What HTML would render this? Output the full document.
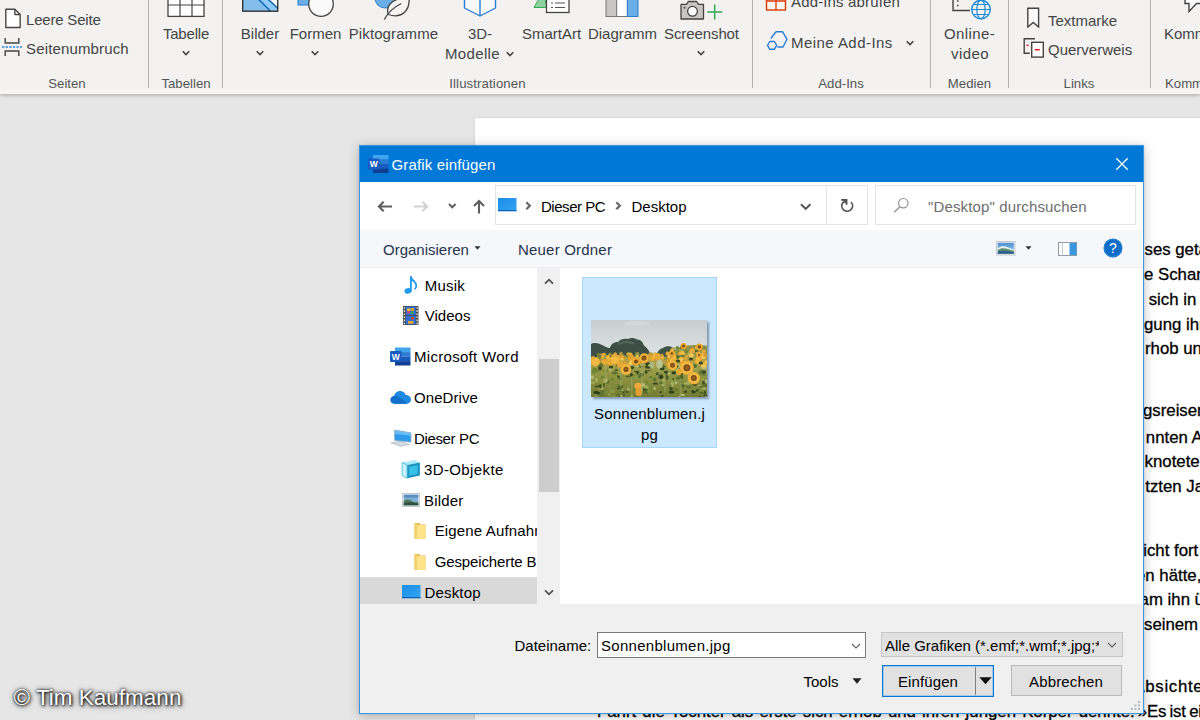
<!DOCTYPE html>
<html lang="de">
<head>
<meta charset="utf-8">
<title>Grafik einfügen</title>
<style>
*{box-sizing:border-box;margin:0;padding:0}
html,body{width:1200px;height:720px;overflow:hidden}
body{position:relative;background:#e6e6e6;font-family:"Liberation Sans",sans-serif;color:#3b3a39}
.abs{position:absolute}
/* ---------- ribbon ---------- */
#ribbon{position:absolute;left:0;top:0;width:1200px;height:94px;overflow:visible;background:linear-gradient(#f3f2f1 0,#f3f2f1 89px,#f7f6f5 90.5px,#f7f6f5 94px);box-shadow:0 1px 4px rgba(0,0,0,.28);z-index:2}
#ribbon .t{position:absolute;font-size:15px;line-height:18px;white-space:nowrap;color:#444}
#ribbon .c{transform:translateX(-50%);text-align:center}
#ribbon .g{position:absolute;font-size:13.2px;line-height:16px;margin-top:.6px;white-space:nowrap;color:#555;transform:translateX(-50%)}
#ribbon .sep{position:absolute;top:0;width:1px;height:88px;background:#b4b2b0;box-shadow:0 0 .6px #b4b2b0}
#ribbon svg{position:absolute;overflow:visible}
/* ---------- document ---------- */
#page{position:absolute;left:475px;top:118px;width:725px;height:602px;background:#fff;box-shadow:0 0 2px rgba(0,0,0,.15);z-index:1}
.doc{position:absolute;font-size:16.8px;line-height:22px;color:#000;-webkit-text-stroke:.3px #000;white-space:nowrap;z-index:1;font-family:"Liberation Sans",sans-serif}
/* ---------- dialog ---------- */
#dlg{position:absolute;left:359px;top:145px;width:785px;height:569px;border:1px solid #3c97e3;background:#f0f0f0;z-index:5;box-shadow:0 2px 11px rgba(0,0,0,.24),0 0 2px rgba(0,0,0,.14);color:#000}
#dlg .t{position:absolute;font-size:15px;line-height:18px;white-space:nowrap}
#dlg svg{position:absolute;overflow:visible}
#title{position:absolute;left:0;top:0;width:783px;height:36px;background:#0078d7}
#addr{position:absolute;left:0;top:36px;width:783px;height:48px;background:#fff}
#tool{position:absolute;left:0;top:84px;width:783px;height:38px;background:#f5f7fa;border-bottom:1px solid #eceef0}
#nav{position:absolute;left:0;top:122px;width:177px;height:336px;background:#fff;overflow:hidden}
#sb{position:absolute;left:178.5px;top:122px;width:20px;height:336px;background:#f0f0f0}
#files{position:absolute;left:200px;top:122px;width:583px;height:336px;background:#fff}
#wm{position:absolute;left:13.5px;top:684px;font-size:22.5px;line-height:28px;color:#fff;z-index:9;white-space:nowrap;text-shadow:0 0 2px rgba(0,0,0,.9),1px 1px 3px rgba(0,0,0,.85),0 0 5px rgba(0,0,0,.6),1px 2px 6px rgba(0,0,0,.4)}
</style>
</head>
<body>

<!-- ================= RIBBON ================= -->
<div id="ribbon">
  <!-- Seiten group -->
  <svg style="left:3.5px;top:8.3px" width="19" height="21.1" viewBox="0 0 18 20"><path d="M1.7 1.2h8.6l5 5v12.3H1.7z" fill="#fff" stroke="#444" stroke-width="1.3" stroke-linejoin="round"/><path d="M10.3 1.2v5h5" fill="none" stroke="#444" stroke-width="1.3" stroke-linejoin="round"/></svg>
  <div class="t" style="left:26px;top:11px;letter-spacing:-.2px">Leere Seite</div>
  <svg style="left:2px;top:37px" width="20" height="20" viewBox="0 0 20 20"><path d="M3.2 1v5h13.6V1M3.2 19v-5h13.6v5" fill="none" stroke="#444" stroke-width="1.4"/><path d="M0 10h20" stroke="#2b88d8" stroke-width="1.4" stroke-dasharray="2.4 1.2"/></svg>
  <div class="t" style="left:26px;top:40px;letter-spacing:.15px">Seitenumbruch</div>
  <div class="g" style="left:67px;top:75px">Seiten</div>
  <div class="sep" style="left:148px"></div>

  <!-- Tabellen group -->
  <svg style="left:167px;top:-8px" width="38" height="26" viewBox="0 0 38 26"><rect x="1" y="1" width="36" height="23.4" fill="#fff" stroke="#444" stroke-width="1.3"/><path d="M13 1v23.4M25 1v23.4M1 13h36" stroke="#444" stroke-width="1.2"/></svg>
  <div class="t c" style="left:186px;top:25px;letter-spacing:-.2px">Tabelle</div>
  <svg style="left:181px;top:50px" width="10" height="6" viewBox="0 0 10 6"><path d="M1.7 1.2l3.3 3.3 3.3-3.3" fill="none" stroke="#444" stroke-width="1.6"/></svg>
  <div class="g" style="left:186px;top:75px">Tabellen</div>
  <div class="sep" style="left:222px"></div>

  <!-- Illustrationen group -->
  <svg style="left:242px;top:-10px" width="37" height="22" viewBox="0 0 37 22"><rect x=".7" y="-6" width="35" height="27.2" fill="#83bdea"/><path d="M16.3 0l19.4 18.2V0z" fill="#fff"/><path d="M7.3 0l21.3 21.3h7.1v-3.5L16.3 0z" fill="#8ecbf8"/><path d="M6.3 -1l22.3 22.3M15.3 -1l20.4 19.2" stroke="#1565b0" stroke-width="1.5" fill="none"/><rect x=".7" y="-6" width="35" height="27.2" fill="none" stroke="#333" stroke-width="1.4"/></svg>
  <div class="t c" style="left:260px;top:25px">Bilder</div>
  <svg style="left:255px;top:50px" width="10" height="6" viewBox="0 0 10 6"><path d="M1.7 1.2l3.3 3.3 3.3-3.3" fill="none" stroke="#444" stroke-width="1.6"/></svg>

  <svg style="left:296px;top:-10px" width="40" height="28" viewBox="0 0 40 28"><rect x="2" y="-4" width="12" height="19" fill="#69afe5" stroke="#2b7cd3" stroke-width="1"/><circle cx="25" cy="14" r="12.3" fill="#fafafa" stroke="#444" stroke-width="1.3"/></svg>
  <div class="t c" style="left:315.5px;top:25px">Formen</div>
  <svg style="left:310px;top:50px" width="10" height="6" viewBox="0 0 10 6"><path d="M1.7 1.2l3.3 3.3 3.3-3.3" fill="none" stroke="#444" stroke-width="1.6"/></svg>

  <svg style="left:372px;top:-10px" width="40" height="31" viewBox="0 0 40 31"><circle cx="13" cy="8" r="10" fill="#69afe5" stroke="#2b7cd3" stroke-width="1"/><path d="M16.5 24.5c-3-7 1-16 20.5-17.5 1.5 14-8 22-20.5 17.5z" fill="#f6f5f4" stroke="#444" stroke-width="1.3"/><path d="M12.3 29.5c3-6 9-12 17-16" fill="none" stroke="#444" stroke-width="1.3"/></svg>
  <div class="t c" style="left:393.5px;top:25px;letter-spacing:.1px">Piktogramme</div>

  <svg style="left:463px;top:-12px" width="34" height="30" viewBox="0 0 34 30"><path d="M1.5 4l15.5-7 15.5 7v16l-15.5 8-15.5-8z" fill="#f8f8f8" stroke="#2b7cd3" stroke-width="1.4" stroke-linejoin="round"/><path d="M1.5 4l15.5 7 15.5-7M17 11v17" fill="none" stroke="#2b7cd3" stroke-width="1.4" stroke-linejoin="round"/></svg>
  <div class="t c" style="left:480px;top:25px">3D-</div>
  <div class="t c" style="left:472.5px;top:45px;letter-spacing:.35px">Modelle</div>
  <svg style="left:505px;top:51px" width="10" height="6" viewBox="0 0 10 6"><path d="M1.7 1.2l3.3 3.3 3.3-3.3" fill="none" stroke="#444" stroke-width="1.6"/></svg>

  <svg style="left:532px;top:-10px" width="40" height="24" viewBox="0 0 40 24"><path d="M2 17.5l9-16 4 16z" fill="#8fd19e" stroke="#33a852" stroke-width="1"/><rect x="14.5" y="-4" width="22.5" height="26.5" fill="#fff" stroke="#444" stroke-width="1.3"/><path d="M19 13h2M23 13h10M19 17.5h2M23 17.5h10" stroke="#555" stroke-width="1.2"/></svg>
  <div class="t c" style="left:551.5px;top:25px">SmartArt</div>

  <svg style="left:605px;top:-10px" width="34" height="28" viewBox="0 0 34 28"><rect x="1" y="-4" width="10.7" height="30.5" fill="#c8c6c4" stroke="#7a7877" stroke-width="1"/><rect x="11.7" y="-4" width="10.7" height="30.5" fill="#fff" stroke="#7a7877" stroke-width="1"/><rect x="22.4" y="-4" width="10.6" height="30.5" fill="#69afe5" stroke="#2b7cd3" stroke-width="1"/></svg>
  <div class="t c" style="left:622.5px;top:25px">Diagramm</div>

  <svg style="left:679px;top:0" width="46" height="22" viewBox="0 0 46 22"><path d="M2 4.3h5.5l1.8-2.8h8.4l1.8 2.8h5v14.7H2z" fill="#c8c6c4" stroke="#444" stroke-width="1.3" stroke-linejoin="round"/><circle cx="13.5" cy="11.3" r="4.9" fill="#fff" stroke="#444" stroke-width="1.3"/><circle cx="5.5" cy="7.7" r="1" fill="#444"/><path d="M35.7 4.5v15M28.3 12h15" stroke="#33a852" stroke-width="1.5"/></svg>
  <div class="t c" style="left:701.5px;top:25px;letter-spacing:-.1px">Screenshot</div>
  <svg style="left:695.5px;top:50px" width="10" height="6" viewBox="0 0 10 6"><path d="M1.7 1.2l3.3 3.3 3.3-3.3" fill="none" stroke="#444" stroke-width="1.6"/></svg>
  <div class="g" style="left:487.5px;top:75px;letter-spacing:.12px">Illustrationen</div>
  <div class="sep" style="left:752px"></div>

  <!-- Add-Ins group -->
  <svg style="left:765px;top:-10px" width="22" height="22" viewBox="0 0 22 22"><rect x="1.5" y="2" width="19" height="18" fill="#fff5f0" stroke="#d83b01" stroke-width="1.4"/><path d="M11 2v18M1.5 11h19" stroke="#d83b01" stroke-width="1.3"/></svg>
  <div class="t" style="left:791px;top:-7px;letter-spacing:.15px">Add-Ins abrufen</div>
  <svg style="left:765px;top:30px" width="24" height="22" viewBox="0 0 24 22"><path d="M5.8 8.5l5.2-6.8h6.5l4.5 7.6-4 7.7h-5.6" fill="none" stroke="#2b7cd3" stroke-width="1.4" stroke-linejoin="round"/><path d="M4.8 11.5h4.6l2.3 3.9-2.3 3.9H4.8l-2.3-3.9z" fill="#f3f2f1" stroke="#2b7cd3" stroke-width="1.4" stroke-linejoin="round"/></svg>
  <div class="t" style="left:791px;top:34px;letter-spacing:.45px">Meine Add-Ins</div>
  <svg style="left:904.5px;top:40px" width="10" height="6" viewBox="0 0 10 6"><path d="M1.7 1.2l3.3 3.3 3.3-3.3" fill="none" stroke="#444" stroke-width="1.6"/></svg>
  <div class="g" style="left:841px;top:75px">Add-Ins</div>
  <div class="sep" style="left:930px"></div>

  <!-- Medien -->
  <svg style="left:951px;top:-10px" width="42" height="32" viewBox="0 0 42 32"><path d="M2 -2v22.5h17" fill="none" stroke="#444" stroke-width="1.4"/><path d="M6 11h1.5M6 15.5h1.5" stroke="#444" stroke-width="1.4"/><circle cx="30" cy="19.5" r="9.3" fill="#f3f2f1" stroke="#1e8ad6" stroke-width="1.4"/><ellipse cx="30" cy="19.5" rx="4.2" ry="9.3" fill="none" stroke="#1e8ad6" stroke-width="1.2"/><path d="M20.7 19.5h18.6M22 14.5h16M22 24.5h16" stroke="#1e8ad6" stroke-width="1.2"/></svg>
  <div class="t c" style="left:969.5px;top:25px;letter-spacing:.4px">Online-</div>
  <div class="t c" style="left:970px;top:45px;letter-spacing:.4px">video</div>
  <div class="g" style="left:969.5px;top:75px">Medien</div>
  <div class="sep" style="left:1008px"></div>

  <!-- Links -->
  <svg style="left:1026px;top:7px" width="15" height="22" viewBox="0 0 15 22"><path d="M1.8 1.3h10.8v18.7l-5.4-4.6-5.4 4.6z" fill="#fbfbfb" stroke="#444" stroke-width="1.4" stroke-linejoin="miter"/></svg>
  <div class="t" style="left:1048px;top:11.5px">Textmarke</div>
  <svg style="left:1022px;top:37px" width="24" height="22" viewBox="0 0 24 22"><path d="M13 1.7H2.2v14.6h5.5" fill="none" stroke="#444" stroke-width="1.4"/><path d="M4.5 8.3h2" stroke="#e81123" stroke-width="1.4"/><rect x="9.7" y="5.3" width="11.6" height="14.8" fill="#fff" stroke="#444" stroke-width="1.4"/><path d="M12.8 12.7h5" stroke="#e81123" stroke-width="1.5"/></svg>
  <div class="t" style="left:1048px;top:40.5px">Querverweis</div>
  <div class="g" style="left:1079px;top:75px">Links</div>
  <div class="sep" style="left:1150px"></div>

  <!-- Kommentare (cut off) -->
  <svg style="left:1183px;top:-8px" width="24" height="24" viewBox="0 0 24 24"><path d="M2 -2v13.5h4v8l7.5-8H24" fill="#fff" stroke="#444" stroke-width="1.4" stroke-linejoin="miter"/></svg>
  <div class="t" style="left:1164px;top:24.5px">Kommentar</div>
  <div class="g" style="left:1165px;top:75px;transform:none">Kommentare</div>
</div>

<!-- ================= DOCUMENT ================= -->
<div id="page"></div>
<div class="doc" style="left:1144.5px;top:238.5px">ses getan</div>
<div class="doc" style="left:1144px;top:264.4px">e Scham</div>
<div class="doc" style="left:1148.7px;top:288.6px">sich in</div>
<div class="doc" style="left:1144px;top:313.8px">gung ihr</div>
<div class="doc" style="left:1145px;top:338.1px">rhob und</div>
<div class="doc" style="left:1143px;top:400px">gsreisen</div>
<div class="doc" style="left:1145.8px;top:426.7px">nnten A</div>
<div class="doc" style="left:1144.6px;top:451px">knotete</div>
<div class="doc" style="left:1145.3px;top:476px">tzten Ja</div>
<div class="doc" style="left:1143.2px;top:539.8px">icht fort</div>
<div class="doc" style="left:1136px;top:564.5px">en hätte,</div>
<div class="doc" style="left:1139.6px;top:589.3px">am ihn ü</div>
<div class="doc" style="left:1144px;top:613.6px">seinem</div>
<div class="doc" style="left:1133.4px;top:675.8px;letter-spacing:.7px">Absichten</div>
<div class="doc" style="left:597px;top:700.5px;word-spacing:1.5px">Fahrt die Tochter als erste sich erhob und ihren jungen Körper dehnte.</div>
<div class="doc" style="left:1137.8px;top:700.5px;letter-spacing:-.2px;word-spacing:-1px">»Es ist ein</div>

<!-- ================= DIALOG ================= -->
<div id="dlg">
  <div id="title">
    <!-- Word icon -->
    <svg style="left:8px;top:8px" width="21" height="20" viewBox="0 0 21 20"><rect x="5" y="1" width="15.5" height="4.6" fill="#41a5ee"/><rect x="5" y="5.6" width="15.5" height="4.5" fill="#2b7cd3"/><rect x="5" y="10.1" width="15.5" height="4.5" fill="#185abd"/><rect x="5" y="14.6" width="15.5" height="4.4" fill="#103f91"/><rect x="0" y="4.5" width="11.5" height="11" rx="1" fill="#185abd"/><text x="5.75" y="13.3" font-family="Liberation Sans, sans-serif" font-size="8.5" font-weight="bold" fill="#fff" text-anchor="middle">W</text></svg>
    <div class="t" style="left:31.5px;top:9.5px;color:#fff;letter-spacing:.16px">Grafik einfügen</div>
    <svg style="left:755px;top:10.5px" width="14" height="14" viewBox="0 0 14 14"><path d="M1.3 1.3l11.4 11.4M12.7 1.3L1.3 12.7" stroke="#fff" stroke-width="1.3"/></svg>
  </div>
  <div id="addr">
    <!-- back / forward / recent / up -->
    <svg style="left:17px;top:17.5px" width="16" height="13" viewBox="0 0 16 13"><path d="M15 6.5H2M6.7 1.7L1.9 6.5l4.8 4.8" fill="none" stroke="#5f5f5f" stroke-width="2.1"/></svg>
    <svg style="left:53px;top:17.5px" width="16" height="13" viewBox="0 0 16 13"><path d="M1 6.5h13M9.3 1.7l4.8 4.8-4.8 4.8" fill="none" stroke="#d2d2d2" stroke-width="2.1"/></svg>
    <svg style="left:87.6px;top:20.5px" width="9" height="6" viewBox="0 0 9 6"><path d="M1 1l3.3 3.3L7.6 1" fill="none" stroke="#5f5f5f" stroke-width="2"/></svg>
    <svg style="left:111.5px;top:17px" width="14" height="15" viewBox="0 0 14 15"><path d="M7 14.5V2M2 7L7 2l5 5" fill="none" stroke="#5f5f5f" stroke-width="2.1"/></svg>
    <!-- address box -->
    <div class="abs" style="left:135px;top:3px;width:373px;height:40px;border:1px solid #e4e4e4;background:#fff"></div>
    <div class="abs" style="left:465.5px;top:3px;width:1px;height:40px;background:#e6e6e6"></div>
    <svg style="left:138px;top:16px" width="19" height="14" viewBox="0 0 19 14"><defs><linearGradient id="mon" x1="0" y1="0" x2="1" y2="1"><stop offset="0" stop-color="#1b8ee8"/><stop offset="1" stop-color="#35a4f3"/></linearGradient></defs><rect x="0" y="0" width="18.5" height="13" fill="url(#mon)"/><rect x="0" y="12" width="18.5" height="1.3" fill="#0d63b8"/></svg>
    <svg style="left:164.5px;top:19.4px" width="7" height="10" viewBox="0 0 7 10"><path d="M1.3 1.2l3.5 3.5-3.5 3.5" fill="none" stroke="#6a6a6a" stroke-width="2.3"/></svg>
    <div class="t" style="left:181px;top:15.5px;letter-spacing:-.47px">Dieser PC</div>
    <svg style="left:254.8px;top:19.4px" width="7" height="10" viewBox="0 0 7 10"><path d="M1.3 1.2l3.5 3.5-3.5 3.5" fill="none" stroke="#6a6a6a" stroke-width="2.3"/></svg>
    <div class="t" style="left:271.5px;top:15.5px">Desktop</div>
    <svg style="left:440px;top:20.5px" width="12" height="8" viewBox="0 0 12 8"><path d="M1 1.3l4.7 4.6 4.7-4.6" fill="none" stroke="#555" stroke-width="2.1"/></svg>
    <svg style="left:480px;top:16px" width="15" height="15" viewBox="0 0 15 15"><path d="M11 4A5.4 5.4 0 1 1 2.5 5.1L6 2.3" fill="none" stroke="#555" stroke-width="1.7"/><path d="M1.2 1.9H6.6V6.8" fill="none" stroke="#555" stroke-width="1.7"/><path d="M2.4 2.2h4v4z" fill="#555"/></svg>
    <!-- search box -->
    <div class="abs" style="left:515px;top:3px;width:260.5px;height:40px;border:1px solid #e4e4e4;background:#fff"></div>
    <svg style="left:533px;top:15px" width="17" height="17" viewBox="0 0 17 17"><circle cx="10.3" cy="6.2" r="4.7" fill="none" stroke="#929292" stroke-width="1.2"/><path d="M6.9 9.7L1.3 15.3" stroke="#929292" stroke-width="1.4"/></svg>
    <div class="t" style="left:568px;top:15.5px;color:#6d6d6d;letter-spacing:.14px">"Desktop" durchsuchen</div>
  </div>
  <div id="tool">
    <div class="t" style="left:23px;top:11px;color:#25344f">Organisieren</div>
    <svg style="left:114px;top:16px" width="7" height="4" viewBox="0 0 7 4"><path d="M.5 .3h6L3.5 3.7z" fill="#333"/></svg>
    <div class="t" style="left:158px;top:11px;color:#25344f;letter-spacing:.2px">Neuer Ordner</div>
    <!-- view icon -->
    <svg style="left:636px;top:10.5px" width="20" height="15" viewBox="0 0 20 15"><defs><linearGradient id="sky" x1="0" y1="0" x2="0" y2="1"><stop offset="0" stop-color="#4f8fd0"/><stop offset="1" stop-color="#a9d0ee"/></linearGradient></defs><rect x=".5" y=".5" width="18.5" height="13.5" fill="#e9edf1" stroke="#c3c8ce" stroke-width="1"/><rect x="1.8" y="1.8" width="16" height="11" fill="url(#sky)"/><path d="M1.8 7.5c5-4.5 9-1 16 1v4.3h-16z" fill="#e8f3ea"/><path d="M1.8 9c5-3.5 9-1 16 .8v3h-16z" fill="#5d8f6b"/><path d="M1.8 10.5c6-2 10 0 16 .5v1.8h-16z" fill="#2e5f95"/></svg>
    <svg style="left:664.5px;top:16.2px" width="7" height="4" viewBox="0 0 7 4"><path d="M.5 .3h6L3.5 3.7z" fill="#333"/></svg>
    <!-- preview pane icon -->
    <svg style="left:697.5px;top:12px" width="19" height="14" viewBox="0 0 19 14"><rect x=".5" y=".5" width="18" height="13" fill="#fff" stroke="#8f9aa6" stroke-width="1"/><path d="M4.5 .5v13" stroke="#c5ccd3" stroke-width="1"/><rect x="11.5" y="1" width="7" height="12" fill="#3a96dd"/></svg>
    <!-- help -->
    <svg style="left:743px;top:8.3px" width="20" height="20" viewBox="0 0 20 20"><circle cx="10" cy="10" r="9.5" fill="#0f6cc7"/><circle cx="10" cy="10" r="8.7" fill="none" stroke="#3f94e0" stroke-width=".6"/><text x="10" y="15" font-family="Liberation Sans, sans-serif" font-size="14" fill="#fff" text-anchor="middle">?</text></svg>
  </div>
  <div id="nav">
    <!-- Musik -->
    <svg style="left:43px;top:8px" width="15" height="19" viewBox="0 0 15 19"><path d="M7.9 15V.2" fill="none" stroke="#1e9bf0" stroke-width="1.8"/><path d="M7.9 1c.7 3.6 5.6 4.3 5.4 8.7-.1 1.3-.6 2.3-1.3 3.1" fill="none" stroke="#1e9bf0" stroke-width="1.7" stroke-linecap="round"/><path d="M7.9 .2c.5 2.3 2.5 3.4 3.8 4.8l-1.2 1.3c-.8-.9-1.7-1.3-2.6-1.6z" fill="#1e9bf0"/><ellipse cx="5" cy="14.9" rx="3.6" ry="2.8" fill="#1e9bf0" transform="rotate(-15 5 14.9)"/></svg>
    <div class="t" style="left:64.8px;top:8.6px;letter-spacing:.2px">Musik</div>
    <!-- Videos -->
    <svg style="left:43px;top:37.5px" width="16" height="19" viewBox="0 0 16 19"><rect x="0" y="0" width="15.5" height="19" fill="#4a4a4a"/><rect x="2.8" y=".6" width="10" height="8.5" fill="#2f6fd6"/><rect x="2.8" y="9.9" width="10" height="8.5" fill="#2f6fd6"/><rect x="4" y="2.5" width="3" height="2.5" fill="#e8c23a"/><rect x="7.5" y="2" width="3.5" height="3" fill="#d9a22c"/><rect x="4" y="5" width="3" height="2.5" fill="#c0448f"/><rect x="7.5" y="5.5" width="3" height="2.5" fill="#3aa655"/><rect x="5" y="15" width="5.5" height="2.8" fill="#e8a32c"/><rect x="8" y="11" width="3" height="2.5" fill="#c5492e"/><path d="M1.4 1.2v17M14.1 1.2v17" stroke="#e8e8e8" stroke-width="1.3" stroke-dasharray="1.6 1.5"/></svg>
    <div class="t" style="left:64.8px;top:39px">Videos</div>
    <!-- Microsoft Word -->
    <svg style="left:30px;top:79px" width="21" height="19" viewBox="0 0 21 19"><rect x="5" y=".5" width="15.5" height="4.6" fill="#41a5ee"/><rect x="5" y="5.1" width="15.5" height="4.5" fill="#2b7cd3"/><rect x="5" y="9.6" width="15.5" height="4.5" fill="#185abd"/><rect x="5" y="14.1" width="15.5" height="4.4" fill="#103f91"/><rect x="0" y="4" width="11.5" height="11" rx="1" fill="#185abd"/><text x="5.75" y="12.8" font-family="Liberation Sans, sans-serif" font-size="8.5" font-weight="bold" fill="#fff" text-anchor="middle">W</text></svg>
    <div class="t" style="left:54px;top:79.5px;letter-spacing:.3px">Microsoft Word</div>
    <!-- OneDrive -->
    <svg style="left:30px;top:122px" width="22" height="15" viewBox="0 0 22 15"><path d="M5 13.8c-2.6 0-4.5-1.7-4.5-3.9 0-2 1.5-3.6 3.5-3.8C4.6 3.2 7 1 10 1c2.6 0 4.8 1.5 5.7 3.8 3 .1 5.3 2.2 5.3 4.8 0 2.4-2 4.2-4.6 4.2z" fill="#1b8ae0"/><path d="M4 6.1c2-.4 4 .3 6 1.6l6.5 4.2c1 .6 0 1.9-1 1.9H5c-2.6 0-4.5-1.7-4.5-3.9 0-2 1.5-3.6 3.5-3.8z" fill="#1170c9"/></svg>
    <div class="t" style="left:54px;top:120.5px;letter-spacing:.07px">OneDrive</div>
    <!-- Dieser PC -->
    <svg style="left:30px;top:161px" width="22" height="18" viewBox="0 0 22 18"><path d="M4.5 1l16.5 2.8v9.4L4.5 11.5z" fill="#2d9bea"/><path d="M4.5 1l16.5 2.8v3L4.5 5z" fill="#66bdf5"/><path d="M4.5 1l16.5 2.8v9.4L4.5 11.5z" fill="none" stroke="#9fb4c6" stroke-width=".8"/><path d="M1 13.8l9-1.3 9.5 3-9 1.7z" fill="#d5dde4" stroke="#a9b6c2" stroke-width=".7"/></svg>
    <div class="t" style="left:54px;top:161.5px;letter-spacing:-.35px">Dieser PC</div>
    <!-- 3D-Objekte -->
    <svg style="left:41px;top:191px" width="20" height="20" viewBox="0 0 18 18"><path d="M1 3.2l11.5-2.2 4.5 2.2-11.5 2.2z" fill="#a8ecfa"/><path d="M1 3.2l4.5 2.2v12L1 15z" fill="#c9f1fb"/><path d="M5.5 5.4l11.5-2.2v11.6l-11.5 2.6z" fill="#1d93c2"/><path d="M7.3 7.2l7.7-1.5v7.7l-7.7 1.7z" fill="#37bfe4"/><path d="M1 3.2l4.5 2.2v12L1 15z" fill="none" stroke="#35b6dc" stroke-width=".7"/></svg>
    <div class="t" style="left:64px;top:192.5px;letter-spacing:.38px">3D-Objekte</div>
    <!-- Bilder -->
    <svg style="left:42px;top:225px" width="18" height="14" viewBox="0 0 18 14"><rect x=".4" y=".4" width="17.2" height="13.2" fill="#fff" stroke="#b8bcc2" stroke-width=".8"/><rect x="1.7" y="1.7" width="14.6" height="10.6" fill="#7fb0d8"/><path d="M1.7 8c4-3 7-1 9 .5s3.5 1 5.6 0v3.8H1.7z" fill="#4d7a57"/><path d="M1.7 10.5c5-2 9-1 14.6 0v1.8H1.7z" fill="#2e4f3c"/><rect x="1.7" y="1.7" width="14.6" height="3" fill="#5a90c0"/></svg>
    <div class="t" style="left:64px;top:223.5px;letter-spacing:.2px">Bilder</div>
    <!-- Eigene Aufnahmen -->
    <svg style="left:54px;top:254.5px" width="12" height="16" viewBox="0 0 12 16"><path d="M.5 0h5l1 1.5h5V16H.5z" fill="#e3bd58"/><path d="M3 2h8.5v14H3z" fill="#ffe289"/><path d="M.5 0h2.5v16H.5z" fill="#f3d06c"/></svg>
    <div class="t" style="left:74.7px;top:254px;letter-spacing:.15px">Eigene Aufnahmen</div>
    <!-- Gespeicherte Bilder -->
    <svg style="left:54px;top:285.5px" width="12" height="16" viewBox="0 0 12 16"><path d="M.5 0h5l1 1.5h5V16H.5z" fill="#e3bd58"/><path d="M3 2h8.5v14H3z" fill="#ffe289"/><path d="M.5 0h2.5v16H.5z" fill="#f3d06c"/></svg>
    <div class="t" style="left:74.7px;top:285px;letter-spacing:-.12px">Gespeicherte Bilder</div>
    <!-- Desktop (selected) -->
    <div class="abs" style="left:0;top:309px;width:179px;height:27px;background:#d9d9d9"></div>
    <svg style="left:42px;top:317px" width="19" height="14" viewBox="0 0 19 14"><rect x="0" y="0" width="18.5" height="13" fill="url(#mon)"/><rect x="0" y="12" width="18.5" height="1.3" fill="#0d63b8"/></svg>
    <div class="t" style="left:64.6px;top:316px;letter-spacing:.15px">Desktop</div>
  </div>
  <div id="sb">
    <svg style="left:5px;top:10px" width="10" height="7" viewBox="0 0 10 7"><path d="M1 5.7l4-4 4 4" fill="none" stroke="#505050" stroke-width="1.7"/></svg>
    <div class="abs" style="left:0;top:91px;width:20px;height:133px;background:#cdcdcd"></div>
    <svg style="left:5px;top:321px" width="10" height="7" viewBox="0 0 10 7"><path d="M1 1.3l4 4 4-4" fill="none" stroke="#505050" stroke-width="1.7"/></svg>
  </div>
  <div id="files">
    <div class="abs" style="left:22px;top:9px;width:135px;height:171px;background:#cce8ff;border:1px solid #a6d5fd"></div>
    <svg id="thumb" class="abs" style="left:30.5px;top:52px;box-shadow:2px 2px 2px rgba(70,85,110,.55);overflow:hidden" width="116" height="77" viewBox="0 0 116 77"><defs><linearGradient id="tsky" x1="0" y1="0" x2="0" y2="1"><stop offset="0" stop-color="#c6cfd0"/><stop offset=".45" stop-color="#dde2e0"/></linearGradient><linearGradient id="tfld" x1="0" y1="0" x2="0" y2="1"><stop offset="0" stop-color="#c29f40"/><stop offset=".3" stop-color="#9a9c48"/><stop offset="1" stop-color="#6f7a30"/></linearGradient><filter id="tb" x="-5%" y="-5%" width="110%" height="110%"><feGaussianBlur stdDeviation=".75"/></filter><filter id="tb2" x="-5%" y="-5%" width="110%" height="110%"><feGaussianBlur stdDeviation=".45"/></filter></defs><rect width="116" height="77" fill="url(#tsky)"/><ellipse cx="46" cy="3.5" rx="13" ry="2.6" fill="#d2d9d8" filter="url(#tb)"/><g filter="url(#tb)"><path d="M-2 38V25c4-3 9-2.5 13 0 3 1 5 3 8 3 1-4 4-6 8-6 2-3 7-4 10-3 3-1.5 7-1 9 .5 4 0 6 3 7 6 3 2 5 5 6 8l2 4.5H-2z" fill="#3d5044"/><path d="M65 38c0-5 3-9 7-10 3-2.5 8-2 10 0 3 1 4 4 4 10z" fill="#3f5246"/><path d="M27 24c4-2 10-3 16-.5" stroke="#53685a" stroke-width="2" fill="none"/><rect x="-2" y="37" width="120" height="42" fill="url(#tfld)"/><circle cx="37.2" cy="34.3" r="2.0" fill="#d9a236"/><circle cx="95.9" cy="34.0" r="1.9" fill="#cfa13a"/><circle cx="24.3" cy="33.9" r="1.7" fill="#e2ad3c"/><circle cx="9.7" cy="35.6" r="2.2" fill="#d9a236"/><circle cx="110.8" cy="36.7" r="1.9" fill="#d9a236"/><circle cx="67.1" cy="35.5" r="2.4" fill="#d9a236"/><circle cx="64.7" cy="34.2" r="1.7" fill="#cfa13a"/><circle cx="12.9" cy="35.0" r="2.2" fill="#e2ad3c"/><circle cx="11.2" cy="36.4" r="1.4" fill="#d9a236"/><circle cx="63.6" cy="33.8" r="1.3" fill="#e2ad3c"/><circle cx="57.6" cy="36.2" r="2.1" fill="#8f9445"/><circle cx="68.1" cy="35.8" r="1.6" fill="#e2ad3c"/><circle cx="81.5" cy="34.7" r="1.9" fill="#cfa13a"/><circle cx="57.4" cy="35.2" r="1.7" fill="#cfa13a"/><circle cx="114.7" cy="34.1" r="1.7" fill="#b59a3f"/><circle cx="16.9" cy="35.9" r="1.2" fill="#6f7f38"/><circle cx="8.2" cy="36.3" r="2.1" fill="#b59a3f"/><circle cx="39.1" cy="35.3" r="1.8" fill="#8f9445"/><circle cx="7.1" cy="34.0" r="1.5" fill="#6f7f38"/><circle cx="77.4" cy="33.8" r="2.0" fill="#6f7f38"/><circle cx="67.2" cy="36.9" r="1.7" fill="#6f7f38"/><circle cx="44.5" cy="36.8" r="1.2" fill="#8f9445"/><circle cx="40.9" cy="36.6" r="1.8" fill="#e2ad3c"/><circle cx="89.7" cy="34.1" r="1.5" fill="#8f9445"/><circle cx="107.2" cy="36.0" r="1.4" fill="#8f9445"/><circle cx="63.8" cy="37.9" r="2.2" fill="#cfa13a"/><circle cx="31.9" cy="35.6" r="1.6" fill="#8f9445"/><circle cx="112.0" cy="34.3" r="1.4" fill="#e2ad3c"/><circle cx="76.7" cy="33.6" r="2.2" fill="#e2ad3c"/><circle cx="30.0" cy="33.5" r="1.7" fill="#b59a3f"/><circle cx="71.0" cy="35.1" r="1.4" fill="#cfa13a"/><circle cx="111.1" cy="36.8" r="2.1" fill="#8f9445"/><circle cx="105.1" cy="37.4" r="2.2" fill="#cfa13a"/><circle cx="45.3" cy="35.5" r="1.3" fill="#6f7f38"/><circle cx="46.3" cy="34.5" r="2.4" fill="#8f9445"/><circle cx="18.2" cy="35.2" r="1.3" fill="#d9a236"/><circle cx="65.9" cy="36.2" r="2.3" fill="#cfa13a"/><circle cx="2.0" cy="37.9" r="1.9" fill="#e2ad3c"/><circle cx="73.9" cy="38.3" r="1.9" fill="#8f9445"/><circle cx="13.5" cy="37.7" r="2.4" fill="#8f9445"/><circle cx="55.7" cy="35.1" r="1.4" fill="#6f7f38"/><circle cx="39.4" cy="34.8" r="2.2" fill="#e2ad3c"/><circle cx="59.9" cy="34.5" r="2.3" fill="#b59a3f"/><circle cx="16.3" cy="36.2" r="1.2" fill="#cfa13a"/><circle cx="34.2" cy="36.7" r="1.3" fill="#b59a3f"/><circle cx="60.2" cy="38.0" r="1.6" fill="#e2ad3c"/><circle cx="61.8" cy="37.4" r="1.6" fill="#e2ad3c"/><circle cx="71.4" cy="37.4" r="2.1" fill="#e2ad3c"/><circle cx="94.1" cy="37.6" r="2.1" fill="#e2ad3c"/><circle cx="22.6" cy="36.0" r="2.1" fill="#d9a236"/><circle cx="92.2" cy="35.9" r="1.4" fill="#cfa13a"/><circle cx="111.9" cy="35.7" r="2.3" fill="#b59a3f"/><circle cx="111.7" cy="35.3" r="1.5" fill="#e2ad3c"/><circle cx="54.5" cy="35.2" r="1.8" fill="#cfa13a"/><circle cx="98.2" cy="35.9" r="2.0" fill="#6f7f38"/><circle cx="9.0" cy="36.8" r="2.3" fill="#6f7f38"/><circle cx="87.5" cy="35.9" r="1.4" fill="#6f7f38"/><circle cx="38.2" cy="37.5" r="2.4" fill="#8f9445"/><circle cx="53.7" cy="37.2" r="1.3" fill="#e2ad3c"/><circle cx="19.1" cy="34.1" r="1.4" fill="#8f9445"/><path d="M78 37c2-5 7-8 12-10 6-2 14-3 28-1v13z" fill="#8f9448"/><ellipse cx="109.4" cy="27.8" rx="2.2" ry="1.8" fill="#a3ad5e"/><ellipse cx="87.3" cy="32.6" rx="1.0" ry="1.6" fill="#4f6428"/><ellipse cx="99.9" cy="37.2" rx="1.6" ry="1.7" fill="#6f8236"/><ellipse cx="83.0" cy="28.6" rx="1.7" ry="1.6" fill="#a3ad5e"/><ellipse cx="90.8" cy="31.0" rx="1.2" ry="1.7" fill="#a3ad5e"/><ellipse cx="112.5" cy="33.9" rx="2.1" ry="1.3" fill="#c9b458"/><ellipse cx="86.4" cy="27.8" rx="1.7" ry="1.7" fill="#6f8236"/><ellipse cx="102.7" cy="35.3" rx="1.2" ry="0.9" fill="#c9b458"/><ellipse cx="106.7" cy="32.7" rx="1.5" ry="1.3" fill="#c9b458"/><ellipse cx="98.4" cy="35.3" rx="2.2" ry="0.9" fill="#6f8236"/><ellipse cx="91.4" cy="35.3" rx="1.7" ry="1.4" fill="#4f6428"/><ellipse cx="97.1" cy="33.4" rx="1.7" ry="1.3" fill="#a3ad5e"/><ellipse cx="97.4" cy="32.4" rx="1.7" ry="1.7" fill="#c9b458"/><ellipse cx="111.8" cy="37.3" rx="1.4" ry="1.4" fill="#6f8236"/><ellipse cx="110.6" cy="27.6" rx="1.2" ry="1.2" fill="#4f6428"/><ellipse cx="104.8" cy="31.1" rx="1.3" ry="1.1" fill="#4f6428"/><ellipse cx="112.5" cy="27.9" rx="2.0" ry="1.5" fill="#6f8236"/><ellipse cx="90.6" cy="27.6" rx="1.7" ry="1.5" fill="#4f6428"/><ellipse cx="95.5" cy="31.8" rx="2.4" ry="1.6" fill="#6f8236"/><ellipse cx="106.0" cy="37.9" rx="1.6" ry="1.2" fill="#a3ad5e"/><ellipse cx="92.8" cy="34.7" rx="1.0" ry="1.4" fill="#3d4f22"/><ellipse cx="105.9" cy="30.6" rx="1.7" ry="1.1" fill="#4f6428"/><ellipse cx="85.8" cy="37.0" rx="1.3" ry="1.7" fill="#4f6428"/><ellipse cx="91.0" cy="26.5" rx="2.1" ry="1.1" fill="#6f8236"/><ellipse cx="109.9" cy="36.2" rx="1.9" ry="1.7" fill="#3d4f22"/><ellipse cx="87.1" cy="37.0" rx="1.8" ry="1.5" fill="#4f6428"/><ellipse cx="32.4" cy="71.2" rx="1.4" ry="2.1" fill="#3d4f22"/><ellipse cx="108.8" cy="65.6" rx="2.6" ry="0.9" fill="#a3ad5e"/><ellipse cx="7.7" cy="73.3" rx="1.9" ry="1.3" fill="#2f3f1f"/><ellipse cx="48.5" cy="75.1" rx="2.2" ry="0.9" fill="#a3ad5e"/><ellipse cx="108.8" cy="77.0" rx="1.5" ry="1.1" fill="#3d4f22"/><ellipse cx="72.9" cy="62.1" rx="1.4" ry="1.4" fill="#889a46"/><ellipse cx="31.4" cy="71.3" rx="3.0" ry="0.9" fill="#4f6428"/><ellipse cx="85.0" cy="62.7" rx="1.4" ry="1.5" fill="#b4bb74"/><ellipse cx="12.3" cy="71.8" rx="1.9" ry="1.5" fill="#5c7030"/><ellipse cx="112.6" cy="54.5" rx="1.4" ry="1.1" fill="#a3ad5e"/><ellipse cx="96.5" cy="68.0" rx="2.3" ry="1.4" fill="#7b8c3c"/><ellipse cx="113.9" cy="72.5" rx="1.0" ry="1.7" fill="#3d4f22"/><ellipse cx="50.0" cy="45.9" rx="2.3" ry="1.3" fill="#2f3f1f"/><ellipse cx="77.8" cy="53.6" rx="1.5" ry="1.2" fill="#b4bb74"/><ellipse cx="21.5" cy="53.1" rx="1.0" ry="1.3" fill="#7b8c3c"/><ellipse cx="112.8" cy="62.6" rx="1.5" ry="2.2" fill="#3d4f22"/><ellipse cx="25.3" cy="50.2" rx="1.7" ry="0.9" fill="#3d4f22"/><ellipse cx="58.3" cy="50.8" rx="2.0" ry="0.8" fill="#3d4f22"/><ellipse cx="94.8" cy="48.9" rx="2.2" ry="1.4" fill="#3d4f22"/><ellipse cx="35.3" cy="51.9" rx="2.2" ry="1.5" fill="#889a46"/><ellipse cx="76.3" cy="68.3" rx="2.8" ry="1.3" fill="#7b8c3c"/><ellipse cx="83.6" cy="60.8" rx="1.6" ry="1.7" fill="#889a46"/><ellipse cx="5.1" cy="72.4" rx="2.8" ry="1.7" fill="#2f3f1f"/><ellipse cx="16.2" cy="61.8" rx="2.0" ry="2.0" fill="#4f6428"/><ellipse cx="95.9" cy="63.9" rx="2.8" ry="1.8" fill="#a3ad5e"/><ellipse cx="9.9" cy="45.4" rx="2.3" ry="2.1" fill="#5c7030"/><ellipse cx="97.0" cy="63.0" rx="2.3" ry="1.7" fill="#a3ad5e"/><ellipse cx="56.8" cy="44.1" rx="2.6" ry="1.8" fill="#2f3f1f"/><ellipse cx="104.2" cy="47.1" rx="2.1" ry="1.8" fill="#b4bb74"/><ellipse cx="29.3" cy="46.5" rx="1.5" ry="1.8" fill="#a3ad5e"/><ellipse cx="26.8" cy="66.1" rx="1.9" ry="2.0" fill="#6f8236"/><ellipse cx="55.6" cy="67.2" rx="2.5" ry="1.7" fill="#a3ad5e"/><ellipse cx="9.0" cy="49.0" rx="1.5" ry="1.8" fill="#3d4f22"/><ellipse cx="72.1" cy="48.5" rx="2.0" ry="1.5" fill="#6f8236"/><ellipse cx="80.3" cy="67.0" rx="1.6" ry="1.5" fill="#b4bb74"/><ellipse cx="54.0" cy="70.1" rx="3.0" ry="1.6" fill="#3d4f22"/><ellipse cx="113.5" cy="75.8" rx="1.0" ry="1.4" fill="#2f3f1f"/><ellipse cx="112.3" cy="59.3" rx="1.5" ry="1.1" fill="#a3ad5e"/><ellipse cx="8.7" cy="47.1" rx="2.5" ry="1.2" fill="#7b8c3c"/><ellipse cx="15.4" cy="71.9" rx="2.0" ry="2.0" fill="#7b8c3c"/><ellipse cx="26.8" cy="74.5" rx="2.0" ry="0.8" fill="#4f6428"/><ellipse cx="110.2" cy="67.2" rx="1.8" ry="1.8" fill="#5c7030"/><ellipse cx="39.9" cy="54.7" rx="2.7" ry="0.8" fill="#7b8c3c"/><ellipse cx="97.3" cy="48.1" rx="2.9" ry="1.8" fill="#3d4f22"/><ellipse cx="29.4" cy="46.2" rx="1.8" ry="2.0" fill="#6f8236"/><ellipse cx="41.8" cy="58.6" rx="1.6" ry="0.9" fill="#6f8236"/><ellipse cx="6.0" cy="66.5" rx="2.3" ry="1.0" fill="#3d4f22"/><ellipse cx="50.6" cy="54.7" rx="2.5" ry="1.9" fill="#5c7030"/><ellipse cx="102.6" cy="71.6" rx="2.3" ry="2.1" fill="#2f3f1f"/><ellipse cx="63.7" cy="68.5" rx="1.1" ry="1.8" fill="#b4bb74"/><ellipse cx="71.3" cy="48.7" rx="2.7" ry="1.5" fill="#2f3f1f"/><ellipse cx="14.8" cy="60.1" rx="1.7" ry="1.2" fill="#3d4f22"/><ellipse cx="47.1" cy="52.1" rx="2.0" ry="1.7" fill="#6f8236"/><ellipse cx="19.4" cy="49.5" rx="1.4" ry="2.1" fill="#b4bb74"/><ellipse cx="63.8" cy="59.4" rx="1.7" ry="1.9" fill="#5c7030"/><ellipse cx="16.2" cy="50.5" rx="1.2" ry="1.3" fill="#6f8236"/><ellipse cx="37.0" cy="56.5" rx="2.6" ry="1.1" fill="#4f6428"/><ellipse cx="87.0" cy="58.0" rx="1.8" ry="1.5" fill="#5c7030"/><ellipse cx="31.3" cy="69.6" rx="2.0" ry="1.6" fill="#7b8c3c"/><ellipse cx="14.6" cy="61.1" rx="2.3" ry="2.0" fill="#a3ad5e"/><ellipse cx="10.7" cy="74.5" rx="1.8" ry="1.7" fill="#5c7030"/><ellipse cx="110.7" cy="72.9" rx="2.7" ry="0.8" fill="#4f6428"/><ellipse cx="49.3" cy="70.0" rx="2.6" ry="2.2" fill="#b4bb74"/><ellipse cx="0.0" cy="57.3" rx="2.9" ry="2.0" fill="#b4bb74"/><ellipse cx="112.8" cy="52.4" rx="1.2" ry="1.0" fill="#2f3f1f"/><ellipse cx="112.7" cy="47.7" rx="2.7" ry="1.8" fill="#b4bb74"/><ellipse cx="9.9" cy="70.4" rx="1.0" ry="1.0" fill="#4f6428"/><ellipse cx="74.9" cy="54.3" rx="1.3" ry="1.2" fill="#5c7030"/><ellipse cx="81.0" cy="47.8" rx="1.1" ry="1.5" fill="#a3ad5e"/><ellipse cx="45.0" cy="51.6" rx="2.2" ry="0.8" fill="#3d4f22"/><ellipse cx="115.6" cy="53.5" rx="1.6" ry="2.0" fill="#a3ad5e"/><ellipse cx="55.1" cy="52.0" rx="1.5" ry="2.1" fill="#3d4f22"/><ellipse cx="6.4" cy="50.6" rx="2.8" ry="1.7" fill="#6f8236"/><ellipse cx="29.8" cy="66.7" rx="2.9" ry="1.1" fill="#4f6428"/><ellipse cx="80.7" cy="68.4" rx="1.7" ry="1.4" fill="#4f6428"/><ellipse cx="92.5" cy="69.1" rx="2.0" ry="1.1" fill="#a3ad5e"/><ellipse cx="36.2" cy="71.9" rx="1.5" ry="1.1" fill="#3d4f22"/><ellipse cx="12.6" cy="65.2" rx="2.2" ry="2.1" fill="#b4bb74"/><ellipse cx="48.4" cy="66.6" rx="2.9" ry="1.0" fill="#5c7030"/><ellipse cx="6.3" cy="44.8" rx="2.2" ry="1.4" fill="#4f6428"/><ellipse cx="21.4" cy="59.3" rx="2.4" ry="1.2" fill="#6f8236"/><ellipse cx="115.7" cy="75.7" rx="1.7" ry="1.1" fill="#2f3f1f"/><ellipse cx="86.6" cy="45.1" rx="2.3" ry="1.3" fill="#7b8c3c"/><ellipse cx="114.3" cy="59.0" rx="1.2" ry="0.9" fill="#6f8236"/><ellipse cx="40.8" cy="76.5" rx="1.2" ry="2.1" fill="#a3ad5e"/><ellipse cx="44.1" cy="70.1" rx="1.6" ry="1.9" fill="#6f8236"/><ellipse cx="5.7" cy="60.1" rx="1.7" ry="2.1" fill="#a3ad5e"/><ellipse cx="37.5" cy="69.1" rx="1.9" ry="1.7" fill="#a3ad5e"/><ellipse cx="94.2" cy="70.1" rx="1.1" ry="0.8" fill="#6f8236"/><ellipse cx="93.2" cy="46.1" rx="1.4" ry="0.9" fill="#7b8c3c"/><ellipse cx="42.1" cy="55.4" rx="2.9" ry="0.9" fill="#7b8c3c"/><ellipse cx="107.2" cy="54.1" rx="2.4" ry="1.6" fill="#6f8236"/><ellipse cx="2.8" cy="52.0" rx="2.0" ry="2.1" fill="#5c7030"/><ellipse cx="91.6" cy="75.1" rx="2.6" ry="1.0" fill="#b4bb74"/><ellipse cx="21.2" cy="71.3" rx="2.5" ry="2.0" fill="#889a46"/><ellipse cx="70.4" cy="55.1" rx="1.6" ry="1.3" fill="#6f8236"/><ellipse cx="59.4" cy="57.3" rx="1.3" ry="1.4" fill="#4f6428"/><ellipse cx="55.9" cy="62.5" rx="1.3" ry="1.4" fill="#6f8236"/><ellipse cx="114.6" cy="53.0" rx="1.2" ry="0.9" fill="#b4bb74"/><ellipse cx="114.7" cy="77.1" rx="1.3" ry="1.0" fill="#b4bb74"/><ellipse cx="72.0" cy="66.9" rx="2.5" ry="2.0" fill="#6f8236"/><ellipse cx="90.5" cy="54.0" rx="1.6" ry="1.2" fill="#3d4f22"/><ellipse cx="85.6" cy="50.8" rx="1.5" ry="1.1" fill="#889a46"/><ellipse cx="32.6" cy="74.9" rx="1.4" ry="0.9" fill="#3d4f22"/><ellipse cx="115.1" cy="61.2" rx="1.5" ry="1.9" fill="#b4bb74"/><ellipse cx="115.0" cy="47.5" rx="1.9" ry="1.9" fill="#b4bb74"/><ellipse cx="106.1" cy="45.4" rx="1.6" ry="1.0" fill="#a3ad5e"/><ellipse cx="69.7" cy="72.1" rx="1.4" ry="0.9" fill="#2f3f1f"/><ellipse cx="100.5" cy="59.3" rx="1.5" ry="1.9" fill="#4f6428"/><ellipse cx="12.3" cy="64.3" rx="2.2" ry="1.1" fill="#7b8c3c"/><ellipse cx="39.4" cy="45.5" rx="3.0" ry="0.9" fill="#a3ad5e"/><ellipse cx="94.5" cy="71.8" rx="1.8" ry="1.3" fill="#3d4f22"/><ellipse cx="9.0" cy="45.1" rx="2.0" ry="1.5" fill="#5c7030"/><ellipse cx="11.8" cy="57.4" rx="2.1" ry="1.7" fill="#6f8236"/><ellipse cx="75.8" cy="57.5" rx="1.5" ry="2.2" fill="#3d4f22"/><ellipse cx="48.5" cy="45.7" rx="2.5" ry="2.0" fill="#5c7030"/><ellipse cx="48.3" cy="73.4" rx="3.0" ry="1.3" fill="#a3ad5e"/><ellipse cx="45.3" cy="57.8" rx="2.9" ry="1.4" fill="#889a46"/><ellipse cx="49.2" cy="71.9" rx="1.8" ry="2.0" fill="#b4bb74"/><ellipse cx="89.7" cy="48.4" rx="1.1" ry="1.0" fill="#5c7030"/><ellipse cx="10.3" cy="65.2" rx="1.7" ry="1.5" fill="#889a46"/><ellipse cx="40.4" cy="49.5" rx="1.3" ry="0.9" fill="#5c7030"/><ellipse cx="56.9" cy="71.4" rx="2.9" ry="1.1" fill="#889a46"/><ellipse cx="97.1" cy="45.5" rx="2.8" ry="1.2" fill="#5c7030"/><ellipse cx="10.0" cy="68.2" rx="2.4" ry="2.0" fill="#a3ad5e"/><ellipse cx="72.0" cy="64.9" rx="1.4" ry="1.5" fill="#a3ad5e"/><ellipse cx="4.8" cy="75.9" rx="1.3" ry="1.3" fill="#889a46"/><ellipse cx="28.7" cy="68.6" rx="2.8" ry="0.9" fill="#2f3f1f"/><ellipse cx="97.7" cy="66.9" rx="2.3" ry="1.3" fill="#5c7030"/><ellipse cx="69.5" cy="62.7" rx="2.3" ry="1.2" fill="#5c7030"/><ellipse cx="35.8" cy="52.5" rx="1.8" ry="1.3" fill="#2f3f1f"/><ellipse cx="50.8" cy="44.8" rx="2.2" ry="1.5" fill="#a3ad5e"/><ellipse cx="51.8" cy="65.0" rx="2.6" ry="2.0" fill="#b4bb74"/><ellipse cx="46.4" cy="46.3" rx="1.7" ry="1.3" fill="#b4bb74"/><ellipse cx="58.5" cy="66.3" rx="1.1" ry="1.0" fill="#7b8c3c"/><ellipse cx="90.2" cy="61.4" rx="1.1" ry="1.5" fill="#5c7030"/><ellipse cx="75.7" cy="70.7" rx="1.1" ry="0.9" fill="#6f8236"/><ellipse cx="22.5" cy="77.4" rx="2.0" ry="2.1" fill="#889a46"/><ellipse cx="79.6" cy="68.5" rx="1.4" ry="2.0" fill="#3d4f22"/><ellipse cx="18.4" cy="74.5" rx="1.5" ry="1.9" fill="#889a46"/><ellipse cx="29.5" cy="76.8" rx="2.0" ry="1.6" fill="#2f3f1f"/><ellipse cx="27.5" cy="56.7" rx="1.4" ry="1.4" fill="#3d4f22"/><ellipse cx="78.8" cy="74.4" rx="1.3" ry="1.9" fill="#6f8236"/><ellipse cx="89.1" cy="45.7" rx="2.7" ry="2.2" fill="#b4bb74"/><ellipse cx="64.4" cy="63.7" rx="2.8" ry="0.9" fill="#2f3f1f"/><ellipse cx="73.1" cy="57.4" rx="2.6" ry="1.2" fill="#7b8c3c"/><ellipse cx="67.0" cy="56.2" rx="2.5" ry="1.4" fill="#889a46"/><ellipse cx="71.4" cy="76.6" rx="1.6" ry="1.5" fill="#3d4f22"/><ellipse cx="74.2" cy="77.5" rx="2.2" ry="1.7" fill="#7b8c3c"/><ellipse cx="85.0" cy="69.4" rx="1.4" ry="1.2" fill="#5c7030"/><ellipse cx="48.5" cy="56.4" rx="1.1" ry="1.5" fill="#4f6428"/><ellipse cx="2.6" cy="44.1" rx="1.7" ry="0.9" fill="#7b8c3c"/><ellipse cx="62.0" cy="58.1" rx="1.6" ry="1.0" fill="#7b8c3c"/><ellipse cx="72.4" cy="60.1" rx="1.3" ry="2.1" fill="#a3ad5e"/><ellipse cx="82.1" cy="59.3" rx="1.1" ry="1.0" fill="#3d4f22"/><ellipse cx="46.6" cy="53.0" rx="1.0" ry="1.7" fill="#2f3f1f"/><ellipse cx="103.6" cy="64.2" rx="2.2" ry="1.6" fill="#2f3f1f"/><ellipse cx="85.1" cy="52.4" rx="2.8" ry="0.9" fill="#2f3f1f"/><ellipse cx="2.9" cy="50.3" rx="1.3" ry="2.1" fill="#6f8236"/><ellipse cx="1.4" cy="62.7" rx="2.9" ry="1.0" fill="#a3ad5e"/><ellipse cx="60.1" cy="65.9" rx="2.3" ry="1.4" fill="#889a46"/><ellipse cx="59.0" cy="46.2" rx="2.3" ry="2.2" fill="#b4bb74"/><ellipse cx="83.0" cy="44.2" rx="2.7" ry="1.8" fill="#b4bb74"/><ellipse cx="9.3" cy="66.3" rx="1.4" ry="2.2" fill="#3d4f22"/><ellipse cx="26.9" cy="45.3" rx="1.7" ry="1.8" fill="#3d4f22"/><ellipse cx="82.6" cy="53.0" rx="2.1" ry="1.4" fill="#2f3f1f"/><ellipse cx="112.7" cy="54.1" rx="2.9" ry="2.1" fill="#6f8236"/><ellipse cx="102.1" cy="44.5" rx="1.5" ry="1.1" fill="#a3ad5e"/><ellipse cx="109.6" cy="69.4" rx="1.7" ry="2.0" fill="#7b8c3c"/><ellipse cx="69.7" cy="56.9" rx="2.7" ry="2.1" fill="#2f3f1f"/><ellipse cx="54.5" cy="72.6" rx="2.4" ry="2.0" fill="#5c7030"/><ellipse cx="110.9" cy="52.0" rx="2.8" ry="1.9" fill="#5c7030"/><ellipse cx="72.2" cy="46.6" rx="2.8" ry="1.0" fill="#4f6428"/><ellipse cx="13.0" cy="65.1" rx="1.3" ry="2.2" fill="#4f6428"/><ellipse cx="3.6" cy="48.7" rx="2.3" ry="0.9" fill="#6f8236"/><ellipse cx="85.5" cy="46.2" rx="2.2" ry="1.3" fill="#2f3f1f"/><ellipse cx="103.4" cy="46.2" rx="2.7" ry="2.1" fill="#5c7030"/><ellipse cx="12.4" cy="51.0" rx="1.2" ry="0.8" fill="#6f8236"/><ellipse cx="95.7" cy="65.5" rx="1.6" ry="0.9" fill="#6f8236"/><ellipse cx="91.9" cy="66.0" rx="1.6" ry="1.3" fill="#3d4f22"/><ellipse cx="2.4" cy="52.7" rx="1.6" ry="1.8" fill="#7b8c3c"/><ellipse cx="105.6" cy="70.2" rx="2.2" ry="1.5" fill="#3d4f22"/><ellipse cx="71.7" cy="45.1" rx="1.8" ry="1.4" fill="#6f8236"/><ellipse cx="40.2" cy="68.0" rx="2.1" ry="1.1" fill="#6f8236"/><ellipse cx="66.6" cy="53.8" rx="1.9" ry="1.5" fill="#3d4f22"/><ellipse cx="88.4" cy="77.2" rx="1.0" ry="1.5" fill="#b4bb74"/><ellipse cx="80.6" cy="72.1" rx="2.9" ry="1.6" fill="#2f3f1f"/><ellipse cx="30.2" cy="76.1" rx="1.6" ry="1.1" fill="#a3ad5e"/><ellipse cx="57.8" cy="47.7" rx="2.3" ry="0.9" fill="#2f3f1f"/><ellipse cx="91.3" cy="65.3" rx="1.7" ry="1.4" fill="#5c7030"/><ellipse cx="103.5" cy="69.3" rx="1.8" ry="1.7" fill="#7b8c3c"/><ellipse cx="23.9" cy="52.9" rx="2.8" ry="1.5" fill="#5c7030"/><ellipse cx="114.0" cy="65.4" rx="2.9" ry="1.0" fill="#4f6428"/><ellipse cx="40.4" cy="55.1" rx="1.3" ry="2.0" fill="#2f3f1f"/><ellipse cx="86.1" cy="49.8" rx="1.9" ry="1.9" fill="#a3ad5e"/><ellipse cx="14.6" cy="59.7" rx="2.8" ry="1.1" fill="#a3ad5e"/><ellipse cx="31.0" cy="69.7" rx="2.7" ry="1.7" fill="#889a46"/><ellipse cx="113.1" cy="68.6" rx="2.2" ry="1.3" fill="#a3ad5e"/><ellipse cx="38.1" cy="50.4" rx="3.0" ry="1.8" fill="#6f8236"/><ellipse cx="19.1" cy="66.4" rx="1.4" ry="1.0" fill="#889a46"/><ellipse cx="92.2" cy="68.9" rx="1.9" ry="1.1" fill="#6f8236"/><ellipse cx="32.6" cy="74.1" rx="1.9" ry="0.8" fill="#5c7030"/><ellipse cx="80.4" cy="61.0" rx="2.3" ry="1.4" fill="#889a46"/><ellipse cx="29.8" cy="69.1" rx="1.0" ry="1.1" fill="#5c7030"/><ellipse cx="81.3" cy="64.0" rx="2.3" ry="2.0" fill="#a3ad5e"/><ellipse cx="78.8" cy="65.8" rx="1.9" ry="1.2" fill="#6f8236"/><ellipse cx="103.8" cy="52.2" rx="1.8" ry="1.8" fill="#889a46"/><ellipse cx="29.0" cy="58.4" rx="1.9" ry="1.7" fill="#5c7030"/><ellipse cx="60.1" cy="66.5" rx="2.7" ry="2.1" fill="#7b8c3c"/><ellipse cx="90.3" cy="57.2" rx="2.0" ry="2.2" fill="#4f6428"/><rect x="29" y="47" width="1.6" height="20" fill="#a9b276" opacity=".38"/><rect x="50" y="44" width="1.6" height="26" fill="#a9b276" opacity=".38"/><rect x="67" y="42" width="1.6" height="22" fill="#a9b276" opacity=".38"/><rect x="73" y="48" width="1.6" height="24" fill="#a9b276" opacity=".38"/><rect x="14" y="46" width="1.6" height="14" fill="#a9b276" opacity=".38"/><rect x="89" y="58" width="1.6" height="16" fill="#a9b276" opacity=".38"/><rect x="40" y="56" width="1.6" height="18" fill="#a9b276" opacity=".38"/><rect x="58" y="50" width="1.6" height="10" fill="#a9b276" opacity=".38"/><ellipse cx="68.5" cy="44" rx="3.2" ry="4.5" fill="#bcc592"/><ellipse cx="61" cy="45" rx="2.4" ry="3.6" fill="#aab67c"/><circle cx="29.1" cy="37.6" r="2.3" fill="#f0b93f"/><circle cx="60.2" cy="36.5" r="2.1" fill="#e3a22c"/><circle cx="23.8" cy="40.0" r="1.3" fill="#dc9a28"/><circle cx="110.0" cy="37.5" r="2.3" fill="#f3c554"/><circle cx="84.6" cy="41.3" r="2.2" fill="#dc9a28"/><circle cx="31.8" cy="39.3" r="1.3" fill="#f3c554"/><circle cx="106.2" cy="41.5" r="2.2" fill="#e3a22c"/><circle cx="30.8" cy="37.6" r="2.3" fill="#e3a22c"/><circle cx="112.7" cy="44.9" r="2.6" fill="#f3c554"/><circle cx="24.6" cy="36.7" r="2.4" fill="#f0b93f"/><circle cx="54.4" cy="40.8" r="1.6" fill="#f0b93f"/><circle cx="41.0" cy="41.6" r="2.4" fill="#f3c554"/><circle cx="54.3" cy="38.3" r="2.1" fill="#f0b93f"/><circle cx="90.5" cy="40.0" r="2.4" fill="#f0b93f"/><circle cx="31.0" cy="39.1" r="1.7" fill="#f3c554"/><circle cx="78.7" cy="40.1" r="2.4" fill="#dc9a28"/><circle cx="41.5" cy="41.7" r="1.7" fill="#f3c554"/><circle cx="49.7" cy="41.6" r="2.2" fill="#dc9a28"/><circle cx="17.7" cy="38.4" r="1.8" fill="#e9ad33"/><circle cx="96.0" cy="44.1" r="2.4" fill="#f0b93f"/><circle cx="61.6" cy="38.8" r="2.1" fill="#e9ad33"/><circle cx="24.3" cy="36.2" r="1.7" fill="#e3a22c"/><circle cx="11.8" cy="36.9" r="1.6" fill="#f3c554"/><circle cx="40.2" cy="37.0" r="2.6" fill="#e3a22c"/><circle cx="19.5" cy="44.0" r="2.2" fill="#e9ad33"/><circle cx="77.5" cy="44.0" r="2.4" fill="#dc9a28"/><circle cx="22.9" cy="42.1" r="2.0" fill="#f3c554"/><circle cx="77.9" cy="36.6" r="1.5" fill="#f3c554"/><circle cx="27.2" cy="36.8" r="2.0" fill="#e9ad33"/><circle cx="81.2" cy="37.8" r="1.5" fill="#e3a22c"/><circle cx="100.1" cy="35.6" r="2.5" fill="#f3c554"/><circle cx="80.7" cy="40.2" r="1.7" fill="#f3c554"/><circle cx="43.5" cy="39.5" r="2.6" fill="#e9ad33"/><circle cx="20.9" cy="38.9" r="2.2" fill="#e9ad33"/><circle cx="108.1" cy="38.6" r="2.7" fill="#e3a22c"/><circle cx="16.8" cy="37.5" r="1.9" fill="#f0b93f"/><circle cx="39.3" cy="43.7" r="1.8" fill="#f3c554"/><circle cx="90.3" cy="40.8" r="2.6" fill="#dc9a28"/><circle cx="50.5" cy="39.5" r="2.1" fill="#dc9a28"/><circle cx="34.0" cy="43.4" r="1.9" fill="#e3a22c"/><circle cx="114.2" cy="43.8" r="1.8" fill="#f0b93f"/><circle cx="38.4" cy="38.5" r="1.7" fill="#e3a22c"/><circle cx="112.8" cy="36.3" r="2.7" fill="#f3c554"/><circle cx="83.8" cy="43.9" r="2.1" fill="#e9ad33"/><circle cx="46.2" cy="36.5" r="1.4" fill="#f3c554"/><circle cx="91.5" cy="44.1" r="2.2" fill="#e3a22c"/><circle cx="17.1" cy="41.9" r="2.3" fill="#e9ad33"/><circle cx="24.7" cy="41.8" r="1.9" fill="#f0b93f"/><circle cx="11.8" cy="37.2" r="1.4" fill="#e9ad33"/><circle cx="106.0" cy="41.7" r="1.8" fill="#f0b93f"/><circle cx="91.2" cy="40.8" r="1.7" fill="#dc9a28"/><circle cx="21.4" cy="35.8" r="1.3" fill="#e3a22c"/><circle cx="6.3" cy="40.9" r="1.4" fill="#e9ad33"/><circle cx="89.8" cy="39.5" r="2.3" fill="#f3c554"/><circle cx="51.8" cy="35.6" r="1.8" fill="#e3a22c"/><circle cx="115.2" cy="41.8" r="1.5" fill="#f3c554"/><circle cx="63.7" cy="36.3" r="2.0" fill="#f0b93f"/><circle cx="1.1" cy="41.9" r="2.7" fill="#e9ad33"/><circle cx="25.3" cy="36.7" r="2.0" fill="#dc9a28"/><circle cx="83.4" cy="37.8" r="2.3" fill="#f0b93f"/><circle cx="107.0" cy="39.0" r="2.3" fill="#f0b93f"/><circle cx="105.7" cy="27.8" r="1.8" fill="#f3c554"/><circle cx="95.5" cy="36.3" r="1.5" fill="#e9ad33"/><circle cx="105.3" cy="27.1" r="1.2" fill="#e3a22c"/><circle cx="81.0" cy="30.1" r="1.9" fill="#f0b93f"/><circle cx="114.4" cy="35.3" r="1.8" fill="#dc9a28"/><circle cx="92.0" cy="32.7" r="1.6" fill="#f0b93f"/><circle cx="83.5" cy="35.0" r="1.6" fill="#f0b93f"/><circle cx="101.9" cy="31.2" r="1.6" fill="#f3c554"/><circle cx="113.9" cy="34.8" r="1.8" fill="#dc9a28"/><circle cx="88.6" cy="33.2" r="1.9" fill="#e3a22c"/><circle cx="90.6" cy="33.1" r="2.2" fill="#f0b93f"/><circle cx="100.8" cy="30.1" r="1.6" fill="#f0b93f"/><circle cx="92.3" cy="33.8" r="1.8" fill="#f0b93f"/><circle cx="108.7" cy="29.8" r="1.2" fill="#dc9a28"/><ellipse cx="20" cy="47" rx="2.2" ry="1.6" fill="#3a4a22"/><ellipse cx="41" cy="47.5" rx="2.2" ry="1.6" fill="#3a4a22"/><ellipse cx="56" cy="47" rx="2.2" ry="1.6" fill="#3a4a22"/><ellipse cx="75" cy="52" rx="2.2" ry="1.6" fill="#3a4a22"/><ellipse cx="87" cy="41" rx="2.2" ry="1.6" fill="#3a4a22"/><ellipse cx="110" cy="43" rx="2.2" ry="1.6" fill="#3a4a22"/><ellipse cx="9" cy="48" rx="2.2" ry="1.6" fill="#3a4a22"/><ellipse cx="100" cy="39" rx="2.2" ry="1.6" fill="#3a4a22"/><ellipse cx="113" cy="52" rx="2.2" ry="1.6" fill="#3a4a22"/></g><g filter="url(#tb2)"><circle cx="95.9" cy="47.8" r="7" fill="#eeb03a"/><circle cx="95.9" cy="47.8" r="5.5" fill="#f3bb45"/><circle cx="95.9" cy="47.8" r="3.5" fill="#7d4c17"/><circle cx="95.9" cy="47.8" r="1.8" fill="#9a6420"/><circle cx="102.8" cy="58.1" r="6.3" fill="#eeb03a"/><circle cx="102.8" cy="58.1" r="4.9" fill="#f3bb45"/><circle cx="102.8" cy="58.1" r="3" fill="#7d4c17"/><circle cx="102.8" cy="58.1" r="1.5" fill="#9a6420"/><circle cx="81.5" cy="45.3" r="5" fill="#eeb03a"/><circle cx="81.5" cy="45.3" r="3.9" fill="#f3bb45"/><circle cx="81.5" cy="45.3" r="2.5" fill="#7d4c17"/><circle cx="81.5" cy="45.3" r="1.2" fill="#9a6420"/><circle cx="53" cy="38.1" r="4.8" fill="#eeb03a"/><circle cx="53" cy="38.1" r="3.7" fill="#f3bb45"/><circle cx="53" cy="38.1" r="2.6" fill="#7d4c17"/><circle cx="53" cy="38.1" r="1.3" fill="#9a6420"/><circle cx="45" cy="41.5" r="4" fill="#e9a934"/><circle cx="45" cy="41.5" r="2" fill="#7d4c17"/><circle cx="35" cy="49.4" r="5.3" fill="#eeb03a"/><circle cx="35" cy="49.4" r="4.1" fill="#f3bb45"/><circle cx="35" cy="49.4" r="2.6" fill="#7d4c17"/><circle cx="35" cy="49.4" r="1.3" fill="#9a6420"/><circle cx="24" cy="40" r="4.4" fill="#eeb03a"/><circle cx="24" cy="40" r="3.4" fill="#f3bb45"/><circle cx="4.6" cy="41.9" r="4.4" fill="#eeb03a"/><circle cx="4.6" cy="41.9" r="3.4" fill="#f3bb45"/><circle cx="14" cy="41.9" r="3" fill="#e9a934"/><circle cx="80.9" cy="33.5" r="3.1" fill="#e9a934"/><circle cx="80.9" cy="33.5" r="1.3" fill="#7d4c17"/><circle cx="92.5" cy="26" r="3.1" fill="#e9a934"/><circle cx="92.5" cy="26" r="1.5" fill="#7d4c17"/><circle cx="108.4" cy="26.9" r="3.4" fill="#e9a934"/><circle cx="108.4" cy="26.9" r="1.7" fill="#7d4c17"/><circle cx="101.3" cy="30.6" r="2.5" fill="#e9a934"/><circle cx="66.5" cy="36.9" r="3" fill="#e9a934"/><circle cx="108" cy="35" r="3" fill="#e9a934"/><circle cx="108" cy="35" r="1.1" fill="#7d4c17"/><circle cx="112.8" cy="31.3" r="2" fill="#e9a934"/><circle cx="29" cy="44.5" r="3.3" fill="#e9a934"/><circle cx="88" cy="52" r="3" fill="#e9a934"/><ellipse cx="47" cy="66" rx="3.6" ry="3.2" fill="#eba93a"/><ellipse cx="47.5" cy="72" rx="3.2" ry="4" fill="#e39c31"/></g></svg>
    <div class="t" style="left:22px;top:134.6px;width:135px;text-align:center;line-height:21px;letter-spacing:.19px;white-space:normal">Sonnenblumen.j<br>pg</div>
  </div>
  <!-- bottom controls (coordinates relative to dialog inner box: abs-360, abs-146) -->
  <div class="t" style="left:154.5px;top:490.5px">Dateiname:</div>
  <div class="abs" style="left:237px;top:486px;width:269px;height:26px;border:1px solid #7a7a7a;background:#fff"></div>
  <div class="t" style="left:241px;top:490.5px;letter-spacing:.28px">Sonnenblumen.jpg</div>
  <svg style="left:491px;top:496.5px" width="10" height="6" viewBox="0 0 10 6"><path d="M1 1l4 4 4-4" fill="none" stroke="#606060" stroke-width="1.1"/></svg>
  <div class="abs" style="left:521px;top:486px;width:242px;height:25px;border:1px solid #c6c6c6;background:#e1e1e1"></div>
  <div class="t" style="left:525px;top:490.5px;width:214px;overflow:hidden">Alle Grafiken (*.emf;*.wmf;*.jpg;*.jpeg;*.png)</div>
  <svg style="left:747px;top:496px" width="10" height="6" viewBox="0 0 10 6"><path d="M1 1l4 4 4-4" fill="none" stroke="#606060" stroke-width="1.1"/></svg>
  <div class="t" style="left:443.5px;top:526.5px">Tools</div>
  <svg style="left:491.5px;top:532px" width="10" height="6" viewBox="0 0 10 6"><path d="M.5 .3h9L5 5.7z" fill="#222"/></svg>
  <div class="abs" style="left:522px;top:519px;width:112px;height:32px;border:1.5px solid #0078d7;background:#e1e1e1;box-shadow:inset 0 0 0 .5px #6db3ec"></div>
  <div class="abs" style="left:615px;top:521px;width:1px;height:28px;background:#7f7f7f"></div>
  <div class="t" style="left:538px;top:526.5px;letter-spacing:.1px">Einfügen</div>
  <svg style="left:618.5px;top:531px" width="13" height="8" viewBox="0 0 13 8"><path d="M.3 .3h12.4L6.5 7.2z" fill="#111"/></svg>
  <div class="abs" style="left:650.5px;top:519px;width:111px;height:31px;border:1px solid #b9b9b9;background:#e1e1e1"></div>
  <div class="t" style="left:669px;top:526.5px;letter-spacing:.15px">Abbrechen</div>
  <!-- resize grip -->
  <svg style="left:769px;top:555px" width="12" height="12" viewBox="0 0 12 12"><g fill="#b4bcc8"><rect x="9" y="0" width="2" height="2"/><rect x="5.5" y="3.5" width="2" height="2"/><rect x="9" y="3.5" width="2" height="2"/><rect x="2" y="7" width="2" height="2"/><rect x="5.5" y="7" width="2" height="2"/><rect x="9" y="7" width="2" height="2"/></g></svg>
</div>

<div id="wm">© Tim Kaufmann</div>
</body>
</html>
